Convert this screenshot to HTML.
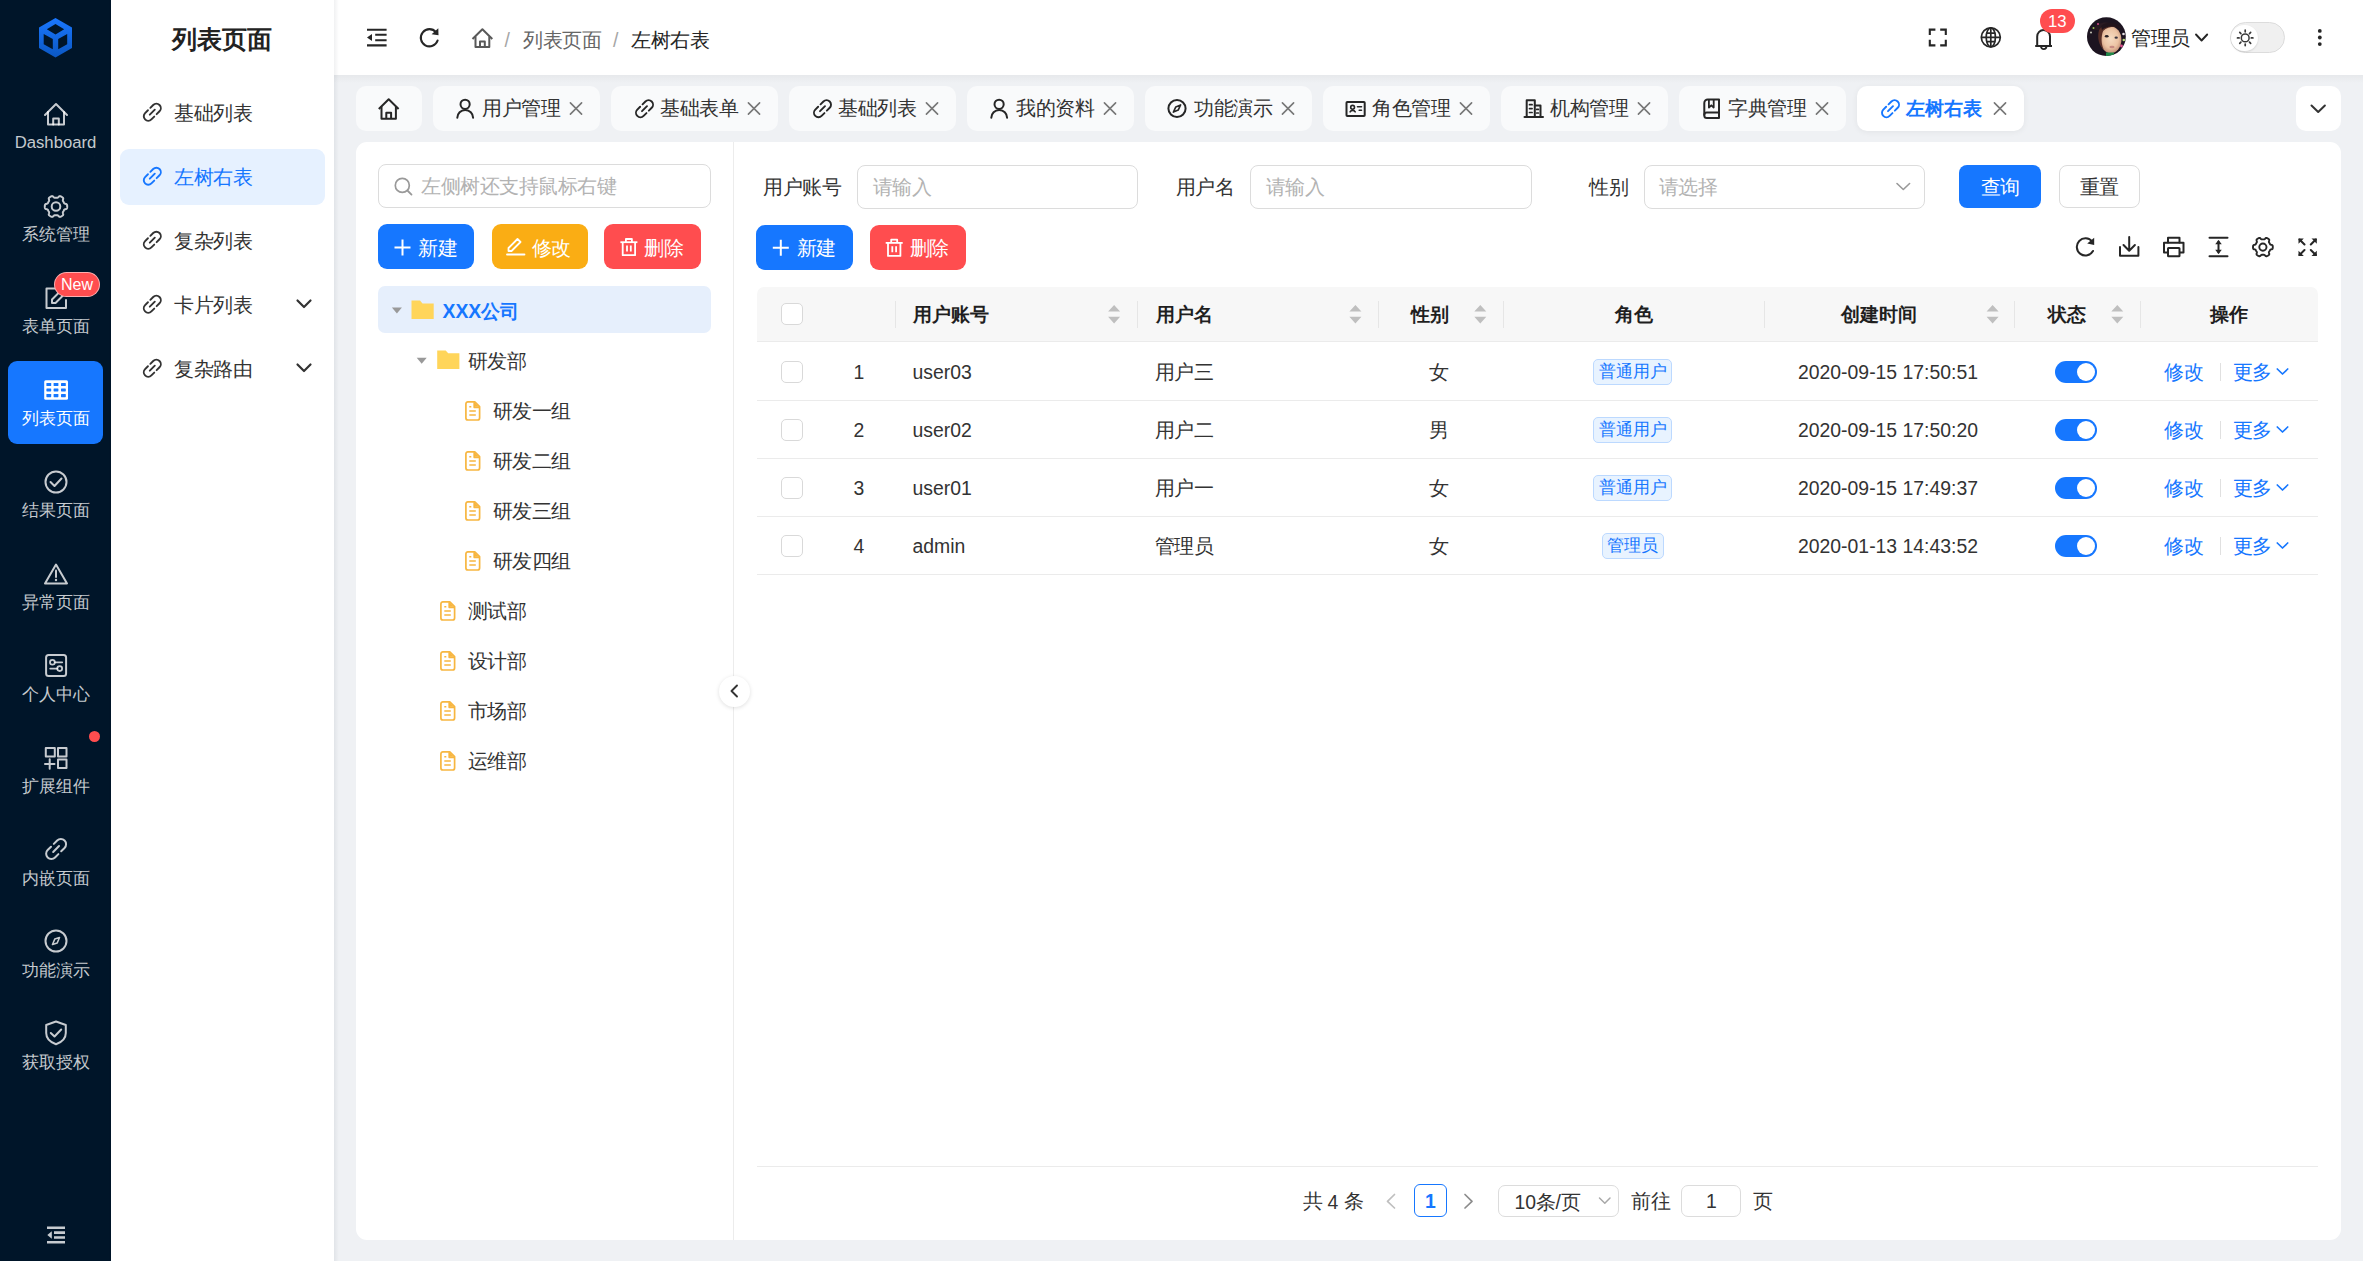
<!DOCTYPE html><html><head><meta charset="utf-8"><style>
*{box-sizing:border-box;margin:0;padding:0}
html,body{width:2363px;height:1261px;overflow:hidden;background:#eff1f4;font-family:"Liberation Sans",sans-serif;color:#262626}
.a{position:absolute}
.t{position:absolute;white-space:nowrap;line-height:1}
svg.i{position:absolute;overflow:visible}
</style></head><body>
<div class="a" style="left:0;top:0;width:111px;height:1261px;background:#001529"></div>
<svg class="i" style="left:0px;top:0px;" width="111" height="80" viewBox="0 0 111 80"><defs><linearGradient id="cg" x1="0" y1="0" x2="0" y2="1"><stop offset="0" stop-color="#1a77ff"/><stop offset="1" stop-color="#0b57c2"/></linearGradient></defs>
<path fill="url(#cg)" fill-rule="evenodd" d="M55.5 18 L72 27.5 L72 48 L55.5 57.5 L39 48 L39 27.5 Z M55.5 24 L46.8 29.2 L55.5 34.4 L64.2 29.2 Z M43.7 34 L52.8 39 L52.8 49.3 L43.7 44.2 Z M67.2 34 L58.2 39 L58.2 49.3 L67.2 44.2 Z"/></svg>
<div class="a" style="left:8px;top:361px;width:95px;height:83px;background:#1677ff;border-radius:9px"></div>
<div class="t" style="left:-244.5px;width:600px;text-align:center;top:135.32px;font-size:16.7px;color:rgba(255,255,255,.78);font-weight:normal;">Dashboard</div>
<div class="t" style="left:-244.5px;width:600px;text-align:center;top:227.32px;font-size:16.7px;color:rgba(255,255,255,.78);font-weight:normal;">系统管理</div>
<div class="t" style="left:-244.5px;width:600px;text-align:center;top:319.32px;font-size:16.7px;color:rgba(255,255,255,.78);font-weight:normal;">表单页面</div>
<div class="t" style="left:-244.5px;width:600px;text-align:center;top:411.32px;font-size:16.7px;color:#fff;font-weight:normal;">列表页面</div>
<div class="t" style="left:-244.5px;width:600px;text-align:center;top:503.32px;font-size:16.7px;color:rgba(255,255,255,.78);font-weight:normal;">结果页面</div>
<div class="t" style="left:-244.5px;width:600px;text-align:center;top:595.32px;font-size:16.7px;color:rgba(255,255,255,.78);font-weight:normal;">异常页面</div>
<div class="t" style="left:-244.5px;width:600px;text-align:center;top:687.32px;font-size:16.7px;color:rgba(255,255,255,.78);font-weight:normal;">个人中心</div>
<div class="t" style="left:-244.5px;width:600px;text-align:center;top:779.32px;font-size:16.7px;color:rgba(255,255,255,.78);font-weight:normal;">扩展组件</div>
<div class="t" style="left:-244.5px;width:600px;text-align:center;top:871.32px;font-size:16.7px;color:rgba(255,255,255,.78);font-weight:normal;">内嵌页面</div>
<div class="t" style="left:-244.5px;width:600px;text-align:center;top:963.32px;font-size:16.7px;color:rgba(255,255,255,.78);font-weight:normal;">功能演示</div>
<div class="t" style="left:-244.5px;width:600px;text-align:center;top:1055.32px;font-size:16.7px;color:rgba(255,255,255,.78);font-weight:normal;">获取授权</div>
<svg class="i" style="left:0px;top:0px;" width="111" height="1261" viewBox="0 0 111 1261">
<g fill="none" stroke="rgba(255,255,255,.78)" stroke-width="2" stroke-linecap="round" stroke-linejoin="round">
 <path d="M45 115 L56 104 L67 115"/>
 <path d="M48 112 V124.5 H64 V112"/>
 <path d="M53.2 124.5 V118.5 H58.8 V124.5"/>
</g>
<path d="M67.20 206.50 L67.19 206.89 L67.17 207.28 L67.12 207.67 L67.03 208.05 L66.88 208.42 L66.57 208.75 L66.02 209.00 L65.30 209.17 L64.74 209.34 L64.41 209.56 L64.21 209.82 L64.06 210.09 L63.92 210.36 L63.77 210.63 L63.62 210.90 L63.46 211.16 L63.30 211.43 L63.14 211.69 L62.98 211.95 L62.86 212.26 L62.83 212.65 L62.96 213.22 L63.17 213.92 L63.23 214.53 L63.10 214.96 L62.86 215.28 L62.57 215.54 L62.26 215.78 L61.93 216.00 L61.60 216.20 L61.26 216.39 L60.91 216.56 L60.55 216.71 L60.17 216.83 L59.78 216.88 L59.34 216.78 L58.85 216.42 L58.34 215.89 L57.91 215.49 L57.55 215.32 L57.23 215.27 L56.92 215.27 L56.61 215.29 L56.31 215.30 L56.00 215.30 L55.69 215.30 L55.39 215.29 L55.08 215.27 L54.77 215.27 L54.45 215.32 L54.09 215.49 L53.66 215.89 L53.15 216.42 L52.66 216.78 L52.22 216.88 L51.83 216.83 L51.45 216.71 L51.09 216.56 L50.74 216.39 L50.40 216.20 L50.07 216.00 L49.74 215.78 L49.43 215.54 L49.14 215.28 L48.90 214.96 L48.77 214.53 L48.83 213.92 L49.04 213.22 L49.17 212.65 L49.14 212.26 L49.02 211.95 L48.86 211.69 L48.70 211.43 L48.54 211.16 L48.38 210.90 L48.23 210.63 L48.08 210.36 L47.94 210.09 L47.79 209.82 L47.59 209.56 L47.26 209.34 L46.70 209.17 L45.98 209.00 L45.43 208.75 L45.12 208.42 L44.97 208.05 L44.88 207.67 L44.83 207.28 L44.81 206.89 L44.80 206.50 L44.81 206.11 L44.83 205.72 L44.88 205.33 L44.97 204.95 L45.12 204.58 L45.43 204.25 L45.98 204.00 L46.70 203.83 L47.26 203.66 L47.59 203.44 L47.79 203.18 L47.94 202.91 L48.08 202.64 L48.23 202.37 L48.38 202.10 L48.54 201.84 L48.70 201.57 L48.86 201.31 L49.02 201.05 L49.14 200.74 L49.17 200.35 L49.04 199.78 L48.83 199.08 L48.77 198.47 L48.90 198.04 L49.14 197.72 L49.43 197.46 L49.74 197.22 L50.07 197.00 L50.40 196.80 L50.74 196.61 L51.09 196.44 L51.45 196.29 L51.83 196.17 L52.22 196.12 L52.66 196.22 L53.15 196.58 L53.66 197.11 L54.09 197.51 L54.45 197.68 L54.77 197.73 L55.08 197.73 L55.39 197.71 L55.69 197.70 L56.00 197.70 L56.31 197.70 L56.61 197.71 L56.92 197.73 L57.23 197.73 L57.55 197.68 L57.91 197.51 L58.34 197.11 L58.85 196.58 L59.34 196.22 L59.78 196.12 L60.17 196.17 L60.55 196.29 L60.91 196.44 L61.26 196.61 L61.60 196.80 L61.93 197.00 L62.26 197.22 L62.57 197.46 L62.86 197.72 L63.10 198.04 L63.23 198.47 L63.17 199.08 L62.96 199.78 L62.83 200.35 L62.86 200.74 L62.98 201.05 L63.14 201.31 L63.30 201.57 L63.46 201.84 L63.62 202.10 L63.77 202.37 L63.92 202.64 L64.06 202.91 L64.21 203.18 L64.41 203.44 L64.74 203.66 L65.30 203.83 L66.02 204.00 L66.57 204.25 L66.88 204.58 L67.03 204.95 L67.12 205.33 L67.17 205.72 L67.19 206.11 Z" fill="none" stroke="rgba(255,255,255,.78)" stroke-width="2.0" stroke-linejoin="round"/><circle cx="56" cy="206.5" r="4.3" fill="none" stroke="rgba(255,255,255,.78)" stroke-width="2.0"/>
<g fill="none" stroke="rgba(255,255,255,.78)" stroke-width="2" stroke-linecap="round" stroke-linejoin="round">
 <path d="M55 288.5 H46.5 V308 H66 V300"/>
 <path d="M52 303 L52 299.5 L62 289.5 L65.5 293 L55.5 303 Z"/>
</g>
<g fill="none" stroke="rgba(255,255,255,.78)" stroke-width="2" stroke-linecap="round" stroke-linejoin="round">
 <circle cx="56" cy="482" r="10.5"/>
 <path d="M50.5 482 L54.5 486 L61.5 478.5"/>
 <path d="M56 564.5 L67 583.5 H45 Z"/>
 <path d="M56 570.5 V577"/>
</g>
<circle cx="56" cy="580" r="1.2" fill="rgba(255,255,255,.78)"/>
<g fill="none" stroke="rgba(255,255,255,.78)" stroke-width="2" stroke-linecap="round" stroke-linejoin="round">
 <rect x="46.1" y="655.1" width="20" height="20.8" rx="2.5"/>
 <path d="M55 662.3 H62.2" stroke-width="1.8"/><circle cx="52.4" cy="662.3" r="2.4" stroke-width="1.8"/>
 <path d="M50.2 668.6 H57.2" stroke-width="1.8"/><circle cx="59.7" cy="668.6" r="2.4" stroke-width="1.8"/>
 <rect x="45.8" y="748" width="9" height="8.5"/>
 <rect x="58" y="748" width="8.5" height="8.5"/>
 <rect x="58" y="759.5" width="8.5" height="8.5"/>
 <path d="M45 764 H54.5 M49.7 759.3 V768.7"/>
</g>
<g fill="none" stroke="rgba(255,255,255,.78)" stroke-width="2" stroke-linecap="round" stroke-linejoin="round">
</g><path d="M53.82 843.91 L57.16 840.56 A5.21 5.21 0 0 1 64.54 847.94 L61.19 851.28 M58.38 854.09 L55.04 857.44 A5.21 5.21 0 0 1 47.66 850.06 L51.01 846.72 M53.18 851.92 L59.02 846.08" fill="none" stroke="rgba(255,255,255,.78)" stroke-width="2.0" stroke-linecap="round"/><g fill="none" stroke="rgba(255,255,255,.78)" stroke-width="2" stroke-linecap="round" stroke-linejoin="round">
 <circle cx="56" cy="941" r="10.5"/>
 <path d="M59.5 937.5 L57.2 943 L52.5 944.5 L54.8 939 Z" stroke-width="1.6"/>
 <path d="M56 1021.5 L65.8 1025 V1033 C65.8 1038.5 61.5 1042.3 56 1044.2 C50.5 1042.3 46.2 1038.5 46.2 1033 V1025 Z"/>
 <path d="M50.8 1033 L54.5 1036.5 L61.2 1029.5"/>
</g>
<g fill="none" stroke="rgba(255,255,255,.78)" stroke-width="2.6">
 <path d="M47 1227.7 H65 M54 1232.6 H65 M54 1237.5 H65 M47 1242.3 H65"/>
</g>
<path d="M47.3 1235 L51.8 1231.2 V1238.8 Z" fill="rgba(255,255,255,.78)"/>
</svg>
<svg class="i" style="left:0px;top:0px;" width="111" height="1261" viewBox="0 0 111 1261"><rect x="44.2" y="380.3" width="23.8" height="19.4" rx="1.5" fill="#fff"/>
<g fill="#1677ff"><rect x="46.4" y="383" width="4.8" height="3" rx=".6"/><rect x="53.6" y="383" width="4.8" height="3" rx=".6"/><rect x="61" y="383" width="4.8" height="3" rx=".6"/>
<rect x="46.4" y="388.4" width="4.8" height="3" rx=".6"/><rect x="53.6" y="388.4" width="4.8" height="3" rx=".6"/><rect x="61" y="388.4" width="4.8" height="3" rx=".6"/>
<rect x="46.4" y="393.9" width="4.8" height="3.3" rx=".6"/><rect x="53.6" y="393.9" width="4.8" height="3.3" rx=".6"/><rect x="61" y="393.9" width="4.8" height="3.3" rx=".6"/></g></svg>
<div class="a" style="left:54px;top:271.5px;width:46px;height:25.5px;border-radius:13px;background:#ff4d4f;border:1px solid rgba(255,255,255,.55)"></div>
<div class="t" style="left:-223px;width:600px;text-align:center;top:276.94px;font-size:16px;color:#fff;font-weight:normal;">New</div>
<div class="a" style="left:89px;top:731px;width:11px;height:11px;border-radius:50%;background:#ff4d4f"></div>
<div class="a" style="left:111px;top:0;width:223px;height:1261px;background:#fff;box-shadow:1px 0 4px rgba(0,21,41,.08)"></div>
<div class="t" style="left:-78px;width:600px;text-align:center;top:26.5px;font-size:25px;color:#222;font-weight:bold;">列表页面</div>
<div class="a" style="left:120px;top:149px;width:205px;height:56px;background:#e6f1ff;border-radius:9px"></div>
<div class="t" style="left:174px;top:103.88px;font-size:19.4px;color:#333;font-weight:normal;"><span style="font-size:20px;letter-spacing:-0.5px;position:relative;top:-0.7px">基础列表</span></div>
<svg class="i" style="left:0px;top:0px;" width="340" height="400" viewBox="0 0 340 400"><path d="M150.35 107.85 L153.21 104.99 A4.45 4.45 0 0 1 159.51 111.29 L156.65 114.15 M154.25 116.55 L151.39 119.41 A4.45 4.45 0 0 1 145.09 113.11 L147.95 110.25 M149.80 114.70 L154.80 109.70" fill="none" stroke="#333" stroke-width="1.9" stroke-linecap="round"/></svg>
<div class="t" style="left:174px;top:167.88px;font-size:19.4px;color:#1677ff;font-weight:normal;"><span style="font-size:20px;letter-spacing:-0.5px;position:relative;top:-0.7px">左树右表</span></div>
<svg class="i" style="left:0px;top:0px;" width="340" height="400" viewBox="0 0 340 400"><path d="M150.35 171.85 L153.21 168.99 A4.45 4.45 0 0 1 159.51 175.29 L156.65 178.15 M154.25 180.55 L151.39 183.41 A4.45 4.45 0 0 1 145.09 177.11 L147.95 174.25 M149.80 178.70 L154.80 173.70" fill="none" stroke="#1677ff" stroke-width="1.9" stroke-linecap="round"/></svg>
<div class="t" style="left:174px;top:231.88px;font-size:19.4px;color:#333;font-weight:normal;"><span style="font-size:20px;letter-spacing:-0.5px;position:relative;top:-0.7px">复杂列表</span></div>
<svg class="i" style="left:0px;top:0px;" width="340" height="400" viewBox="0 0 340 400"><path d="M150.35 235.85 L153.21 232.99 A4.45 4.45 0 0 1 159.51 239.29 L156.65 242.15 M154.25 244.55 L151.39 247.41 A4.45 4.45 0 0 1 145.09 241.11 L147.95 238.25 M149.80 242.70 L154.80 237.70" fill="none" stroke="#333" stroke-width="1.9" stroke-linecap="round"/></svg>
<div class="t" style="left:174px;top:295.88px;font-size:19.4px;color:#333;font-weight:normal;"><span style="font-size:20px;letter-spacing:-0.5px;position:relative;top:-0.7px">卡片列表</span></div>
<svg class="i" style="left:0px;top:0px;" width="340" height="400" viewBox="0 0 340 400"><path d="M150.35 299.85 L153.21 296.99 A4.45 4.45 0 0 1 159.51 303.29 L156.65 306.15 M154.25 308.55 L151.39 311.41 A4.45 4.45 0 0 1 145.09 305.11 L147.95 302.25 M149.80 306.70 L154.80 301.70" fill="none" stroke="#333" stroke-width="1.9" stroke-linecap="round"/></svg>
<div class="t" style="left:174px;top:359.88px;font-size:19.4px;color:#333;font-weight:normal;"><span style="font-size:20px;letter-spacing:-0.5px;position:relative;top:-0.7px">复杂路由</span></div>
<svg class="i" style="left:0px;top:0px;" width="340" height="400" viewBox="0 0 340 400"><path d="M150.35 363.85 L153.21 360.99 A4.45 4.45 0 0 1 159.51 367.29 L156.65 370.15 M154.25 372.55 L151.39 375.41 A4.45 4.45 0 0 1 145.09 369.11 L147.95 366.25 M149.80 370.70 L154.80 365.70" fill="none" stroke="#333" stroke-width="1.9" stroke-linecap="round"/></svg>
<svg class="i" style="left:0px;top:0px;" width="340" height="400" viewBox="0 0 340 400"><path d="M297.5 300.5 L304 307 L310.5 300.5" fill="none" stroke="#333" stroke-width="2.2" stroke-linecap="round" stroke-linejoin="round"/></svg>
<svg class="i" style="left:0px;top:0px;" width="340" height="400" viewBox="0 0 340 400"><path d="M297.5 364.5 L304 371 L310.5 364.5" fill="none" stroke="#333" stroke-width="2.2" stroke-linecap="round" stroke-linejoin="round"/></svg>
<div class="a" style="left:334px;top:0;width:2029px;height:75px;background:#fff"></div>
<svg class="i" style="left:0px;top:0px;" width="2363" height="80" viewBox="0 0 2363 80">
<g fill="none" stroke="#262626" stroke-width="2.1">
 <path d="M367 29.7 H386.6 M375.2 34.8 H386.6 M375.2 40.2 H386.6 M367 45.4 H386.6"/>
</g>
<path d="M367 37.5 L372 34 V41 Z" fill="#262626"/>
<g fill="none" stroke="#262626" stroke-width="2.1" stroke-linecap="round">
 <path d="M437.6 40.5 A8.6 8.6 0 1 1 436 32.2"/>
</g>
<path d="M438.3 28.2 L438.5 35.3 L431.6 34.2 Z" fill="#262626"/>
<g fill="none" stroke="#595959" stroke-width="2" stroke-linejoin="round">
 <path d="M472.5 39 L482.4 29.2 L492.3 39"/>
 <path d="M475.5 36.5 V47 H489.3 V36.5"/>
 <path d="M480 47 V41.5 H484.8 V47"/>
</g>
</svg>
<div class="t" style="left:504.5px;top:30.58px;font-size:19.4px;color:#a6a6a6;font-weight:normal;">/</div>
<div class="t" style="left:523px;top:30.78px;font-size:19.4px;color:#666;font-weight:normal;"><span style="font-size:20px;letter-spacing:-0.5px;position:relative;top:-0.7px">列表页面</span></div>
<div class="t" style="left:613px;top:30.58px;font-size:19.4px;color:#a6a6a6;font-weight:normal;">/</div>
<div class="t" style="left:631px;top:30.78px;font-size:19.4px;color:#262626;font-weight:normal;"><span style="font-size:20px;letter-spacing:-0.5px;position:relative;top:-0.7px">左树右表</span></div>
<svg class="i" style="left:0px;top:0px;" width="2363" height="80" viewBox="0 0 2363 80">
<g fill="none" stroke="#262626" stroke-width="2.1">
 <path d="M1929.8 35 V29.6 H1935.4 M1940.2 29.6 H1945.8 V35 M1945.8 39.8 V45.4 H1940.2 M1935.4 45.4 H1929.8 V39.8"/>
</g>
<g fill="none" stroke="#262626" stroke-width="1.7">
 <circle cx="1990.8" cy="37.35" r="9.5"/>
 <ellipse cx="1990.8" cy="37.35" rx="4.6" ry="9.5"/>
 <path d="M1990.8 27.85 V46.85 M1981.3 37.35 H2000.3 M1986.2 33.15 H1995.4 M1986.2 41.55 H1995.4"/>
</g>
<g fill="none" stroke="#262626" stroke-width="2" stroke-linejoin="round">
 <path d="M2037.2 46 V36.5 A6.4 6.6 0 0 1 2050 36.5 V46"/>
 <path d="M2035.2 46 H2052"/>
</g>
<path d="M2041 46.6 A2.7 2.5 0 0 0 2046.4 46.6" fill="none" stroke="#262626" stroke-width="1.9"/>
</svg>
<div class="a" style="left:2039.6px;top:9.1px;width:35.2px;height:24.3px;border-radius:12.2px;background:#ff4d4f"></div>
<div class="t" style="left:1757.1999999999998px;width:600px;text-align:center;top:13.95px;font-size:16.7px;color:#fff;font-weight:normal;">13</div>
<svg class="i" style="left:0px;top:0px;" width="2363" height="80" viewBox="0 0 2363 80"><defs><clipPath id="avc"><circle cx="2106.4" cy="36.7" r="19.4"/></clipPath>
<radialGradient id="skin" cx="0.5" cy="0.45" r="0.6"><stop offset="0" stop-color="#f6dcc2"/><stop offset="0.6" stop-color="#ecc3a3"/><stop offset="1" stop-color="#b9826a"/></radialGradient></defs>
<g clip-path="url(#avc)">
<rect x="2086" y="17" width="41" height="41" fill="#1c1420"/>
<path d="M2093 30 C2096 22 2108 20 2118 26 L2112 30 Z" fill="#2a1a22"/>
<ellipse cx="2110.8" cy="39.8" rx="10.6" ry="13.4" fill="url(#skin)"/>
<path d="M2099 30 C2104 23 2114 22 2121 28 C2116 26 2108 26 2103 31 C2101 37 2101 44 2104 50 C2099 46 2097 38 2099 30 Z" fill="#5a3028"/>
<path d="M2101 26 C2106 22 2112 22 2118 25 L2121 29 C2114 25 2106 26 2102 30 Z" fill="#21141c"/>
<ellipse cx="2106.7" cy="36.3" rx="1.9" ry="1.2" fill="#2b2226"/>
<ellipse cx="2116.2" cy="37.7" rx="1.7" ry="1.1" fill="#3a3440"/>
<ellipse cx="2112" cy="47" rx="2.6" ry="1.2" fill="#c88c82"/>
<rect x="2106" y="52.5" width="8" height="5" fill="#1f8a4a"/>
<circle cx="2123.5" cy="34" r="1.3" fill="#e9e2e6"/><circle cx="2123.8" cy="40" r="1.3" fill="#b9e07a"/><circle cx="2121.5" cy="46" r="1.4" fill="#e0508f"/>
<circle cx="2098" cy="24" r="1" fill="#d04a8a"/><circle cx="2093.5" cy="28" r="1" fill="#9bbf5a"/><circle cx="2091" cy="32.5" r="1" fill="#c9c9b9"/>
</g></svg>
<div class="t" style="left:2131px;top:28.58px;font-size:19.4px;color:#262626;font-weight:normal;"><span style="font-size:20px;letter-spacing:-0.5px;position:relative;top:-0.7px">管理员</span></div>
<svg class="i" style="left:0px;top:0px;" width="2363" height="80" viewBox="0 0 2363 80"><path d="M2196 34.5 L2201.6 40.5 L2207.2 34.5" fill="none" stroke="#262626" stroke-width="1.9" stroke-linecap="round" stroke-linejoin="round"/></svg>
<div class="a" style="left:2229.6px;top:22px;width:55px;height:31px;border-radius:15.5px;background:#f0f0f0;border:1px solid #dcdcdc"></div>
<div class="a" style="left:2231.4px;top:24.8px;width:26.2px;height:26.2px;border-radius:50%;background:#fff;box-shadow:0 1px 2px rgba(0,0,0,.12)"></div>
<svg class="i" style="left:0px;top:0px;" width="2363" height="80" viewBox="0 0 2363 80"><circle cx="2245.2" cy="37.9" r="3.9" fill="none" stroke="#3a3a3a" stroke-width="1.5"/><path d="M2251.30 37.90 L2252.90 37.90 M2249.51 42.21 L2250.64 43.34 M2245.20 44.00 L2245.20 45.60 M2240.89 42.21 L2239.76 43.34 M2239.10 37.90 L2237.50 37.90 M2240.89 33.59 L2239.76 32.46 M2245.20 31.80 L2245.20 30.20 M2249.51 33.59 L2250.64 32.46 " stroke="#3a3a3a" stroke-width="1.7" stroke-linecap="round"/></svg>
<svg class="i" style="left:0px;top:0px;" width="2363" height="80" viewBox="0 0 2363 80"><circle cx="2319.8" cy="30.9" r="1.9" fill="#262626"/><circle cx="2319.8" cy="37.5" r="1.9" fill="#262626"/><circle cx="2319.8" cy="44.1" r="1.9" fill="#262626"/></svg>
<div class="a" style="left:334px;top:75px;width:2029px;height:1186px;background:#eff1f4"></div>
<div class="a" style="left:334px;top:75px;width:2029px;height:8px;background:linear-gradient(rgba(0,0,0,.035),rgba(0,0,0,0))"></div>
<div class="a" style="left:356px;top:86px;width:66px;height:45px;border-radius:10px;background:#f9fafb"></div>
<svg class="i" style="left:0px;top:0px;" width="2363" height="140" viewBox="0 0 2363 140"><g fill="none" stroke="#262626" stroke-width="2" stroke-linejoin="round">
 <path d="M378.8 109 L388.7 99.2 L398.6 109"/>
 <path d="M381.5 106.5 V118.7 H395.9 V106.5"/>
 <path d="M386.3 118.7 V112.8 H391.1 V118.7"/></g></svg>
<div class="a" style="left:433px;top:86px;width:167px;height:45px;border-radius:10px;background:#f9fafb;"></div>
<svg class="i" style="left:0px;top:0px;" width="2363" height="140" viewBox="0 0 2363 140"><g fill="none" stroke="#262626" stroke-width="2" stroke-linecap="round" stroke-linejoin="round"><circle cx="465.1" cy="104.3" r="4.6"/><path d="M457.3 117.8 A7.9 7.9 0 0 1 473.1 117.8"/></g></svg>
<div class="t" style="left:482px;top:99.08px;font-size:19.4px;color:#333;font-weight:normal;"><span style="font-size:20px;letter-spacing:-0.5px;position:relative;top:-0.7px">用户管理</span></div>
<svg class="i" style="left:0px;top:0px;" width="2363" height="140" viewBox="0 0 2363 140"><path d="M570.4 102.9 L581.6 114.1 M581.6 102.9 L570.4 114.1" stroke="#777" stroke-width="1.6" stroke-linecap="round"/></svg>
<div class="a" style="left:611px;top:86px;width:167px;height:45px;border-radius:10px;background:#f9fafb;"></div>
<svg class="i" style="left:0px;top:0px;" width="2363" height="140" viewBox="0 0 2363 140"><path d="M642.55 104.35 L645.41 101.49 A4.45 4.45 0 0 1 651.71 107.79 L648.85 110.65 M646.45 113.05 L643.59 115.91 A4.45 4.45 0 0 1 637.29 109.61 L640.15 106.75 M642.00 111.20 L647.00 106.20" fill="none" stroke="#262626" stroke-width="1.9" stroke-linecap="round"/></svg>
<div class="t" style="left:660px;top:99.08px;font-size:19.4px;color:#333;font-weight:normal;"><span style="font-size:20px;letter-spacing:-0.5px;position:relative;top:-0.7px">基础表单</span></div>
<svg class="i" style="left:0px;top:0px;" width="2363" height="140" viewBox="0 0 2363 140"><path d="M748.4 102.9 L759.6 114.1 M759.6 102.9 L748.4 114.1" stroke="#777" stroke-width="1.6" stroke-linecap="round"/></svg>
<div class="a" style="left:789px;top:86px;width:167px;height:45px;border-radius:10px;background:#f9fafb;"></div>
<svg class="i" style="left:0px;top:0px;" width="2363" height="140" viewBox="0 0 2363 140"><path d="M820.55 104.35 L823.41 101.49 A4.45 4.45 0 0 1 829.71 107.79 L826.85 110.65 M824.45 113.05 L821.59 115.91 A4.45 4.45 0 0 1 815.29 109.61 L818.15 106.75 M820.00 111.20 L825.00 106.20" fill="none" stroke="#262626" stroke-width="1.9" stroke-linecap="round"/></svg>
<div class="t" style="left:838px;top:99.08px;font-size:19.4px;color:#333;font-weight:normal;"><span style="font-size:20px;letter-spacing:-0.5px;position:relative;top:-0.7px">基础列表</span></div>
<svg class="i" style="left:0px;top:0px;" width="2363" height="140" viewBox="0 0 2363 140"><path d="M926.4 102.9 L937.6 114.1 M937.6 102.9 L926.4 114.1" stroke="#777" stroke-width="1.6" stroke-linecap="round"/></svg>
<div class="a" style="left:967px;top:86px;width:167px;height:45px;border-radius:10px;background:#f9fafb;"></div>
<svg class="i" style="left:0px;top:0px;" width="2363" height="140" viewBox="0 0 2363 140"><g fill="none" stroke="#262626" stroke-width="2" stroke-linecap="round" stroke-linejoin="round"><circle cx="999.1" cy="104.3" r="4.6"/><path d="M991.3 117.8 A7.9 7.9 0 0 1 1007.1 117.8"/></g></svg>
<div class="t" style="left:1016px;top:99.08px;font-size:19.4px;color:#333;font-weight:normal;"><span style="font-size:20px;letter-spacing:-0.5px;position:relative;top:-0.7px">我的资料</span></div>
<svg class="i" style="left:0px;top:0px;" width="2363" height="140" viewBox="0 0 2363 140"><path d="M1104.4 102.9 L1115.6 114.1 M1115.6 102.9 L1104.4 114.1" stroke="#777" stroke-width="1.6" stroke-linecap="round"/></svg>
<div class="a" style="left:1145px;top:86px;width:167px;height:45px;border-radius:10px;background:#f9fafb;"></div>
<svg class="i" style="left:0px;top:0px;" width="2363" height="140" viewBox="0 0 2363 140"><g fill="none" stroke="#262626" stroke-width="2" stroke-linecap="round" stroke-linejoin="round"><circle cx="1177.0" cy="108.5" r="8.6"/></g><path d="M1180.6 104.9 L1178.2 110.1 L1173.4 112.1 L1175.8 106.9 Z" fill="none" stroke="#262626" stroke-width="1.6" stroke-linejoin="round"/></svg>
<div class="t" style="left:1194px;top:99.08px;font-size:19.4px;color:#333;font-weight:normal;"><span style="font-size:20px;letter-spacing:-0.5px;position:relative;top:-0.7px">功能演示</span></div>
<svg class="i" style="left:0px;top:0px;" width="2363" height="140" viewBox="0 0 2363 140"><path d="M1282.4 102.9 L1293.6 114.1 M1293.6 102.9 L1282.4 114.1" stroke="#777" stroke-width="1.6" stroke-linecap="round"/></svg>
<div class="a" style="left:1323px;top:86px;width:167px;height:45px;border-radius:10px;background:#f9fafb;"></div>
<svg class="i" style="left:0px;top:0px;" width="2363" height="140" viewBox="0 0 2363 140"><g fill="none" stroke="#262626" stroke-width="2" stroke-linecap="round" stroke-linejoin="round"><rect x="1346.5" y="101.9" width="18.2" height="14.2" rx="0.8"/></g><g fill="none" stroke="#262626" stroke-width="1.6" stroke-linecap="round"><circle cx="1352.6" cy="107.3" r="1.9"/><path d="M1350.1 111.9 A2.9 2.9 0 0 1 1355.2 111.9"/><path d="M1357.5 106.7 H1361.5 M1359.2 110.3 H1361.5"/></g></svg>
<div class="t" style="left:1372px;top:99.08px;font-size:19.4px;color:#333;font-weight:normal;"><span style="font-size:20px;letter-spacing:-0.5px;position:relative;top:-0.7px">角色管理</span></div>
<svg class="i" style="left:0px;top:0px;" width="2363" height="140" viewBox="0 0 2363 140"><path d="M1460.4 102.9 L1471.6 114.1 M1471.6 102.9 L1460.4 114.1" stroke="#777" stroke-width="1.6" stroke-linecap="round"/></svg>
<div class="a" style="left:1501px;top:86px;width:167px;height:45px;border-radius:10px;background:#f9fafb;"></div>
<svg class="i" style="left:0px;top:0px;" width="2363" height="140" viewBox="0 0 2363 140"><g fill="none" stroke="#262626" stroke-width="2" stroke-linejoin="round" stroke-linecap="round"><path d="M1524.5 117.0 H1543.0"/><path d="M1526.7 117.0 V100.3 H1534.8 V117.0"/><path d="M1534.8 105.6 H1540.5 V117.0"/></g><g fill="none" stroke="#262626" stroke-width="1.7" stroke-linecap="round"><path d="M1529.5 104.7 H1532.1 M1529.5 108.6 H1532.1 M1529.5 112.5 H1532.1 M1536.7 109.4 H1538.4 M1536.7 113.0 H1538.4"/></g></svg>
<div class="t" style="left:1550px;top:99.08px;font-size:19.4px;color:#333;font-weight:normal;"><span style="font-size:20px;letter-spacing:-0.5px;position:relative;top:-0.7px">机构管理</span></div>
<svg class="i" style="left:0px;top:0px;" width="2363" height="140" viewBox="0 0 2363 140"><path d="M1638.4 102.9 L1649.6 114.1 M1649.6 102.9 L1638.4 114.1" stroke="#777" stroke-width="1.6" stroke-linecap="round"/></svg>
<div class="a" style="left:1679px;top:86px;width:167px;height:45px;border-radius:10px;background:#f9fafb;"></div>
<svg class="i" style="left:0px;top:0px;" width="2363" height="140" viewBox="0 0 2363 140"><g fill="none" stroke="#262626" stroke-width="2" stroke-linecap="round" stroke-linejoin="round"><path d="M1704.3 114.5 V103.0 A3.5 3.5 0 0 1 1707.8 99.5 H1719.0 V118.0 H1706.8 A2.5 2.5 0 0 1 1704.3 115.5 Z"/><path d="M1704.3 114.8 A2.5 2.5 0 0 1 1706.8 112.4 H1719.0"/></g><path d="M1708.9 99.5 V107.5 L1711.3 105.3 L1713.7 107.5 V99.5" fill="none" stroke="#262626" stroke-width="1.8" stroke-linejoin="round"/></svg>
<div class="t" style="left:1728px;top:99.08px;font-size:19.4px;color:#333;font-weight:normal;"><span style="font-size:20px;letter-spacing:-0.5px;position:relative;top:-0.7px">字典管理</span></div>
<svg class="i" style="left:0px;top:0px;" width="2363" height="140" viewBox="0 0 2363 140"><path d="M1816.4 102.9 L1827.6 114.1 M1827.6 102.9 L1816.4 114.1" stroke="#777" stroke-width="1.6" stroke-linecap="round"/></svg>
<div class="a" style="left:1857px;top:86px;width:167px;height:45px;border-radius:10px;background:#fff;box-shadow:0 1px 6px rgba(0,0,0,.06)"></div>
<svg class="i" style="left:0px;top:0px;" width="2363" height="140" viewBox="0 0 2363 140"><path d="M1888.55 104.35 L1891.41 101.49 A4.45 4.45 0 0 1 1897.71 107.79 L1894.85 110.65 M1892.45 113.05 L1889.59 115.91 A4.45 4.45 0 0 1 1883.29 109.61 L1886.15 106.75 M1888.00 111.20 L1893.00 106.20" fill="none" stroke="#1677ff" stroke-width="1.9" stroke-linecap="round"/></svg>
<div class="t" style="left:1906px;top:99.08px;font-size:19.4px;color:#1677ff;font-weight:bold;">左树右表</div>
<svg class="i" style="left:0px;top:0px;" width="2363" height="140" viewBox="0 0 2363 140"><path d="M1994.4 102.9 L2005.6 114.1 M2005.6 102.9 L1994.4 114.1" stroke="#777" stroke-width="1.6" stroke-linecap="round"/></svg>
<div class="a" style="left:2296px;top:86px;width:44.5px;height:44.5px;border-radius:10px;background:#fff"></div>
<svg class="i" style="left:0px;top:0px;" width="2363" height="140" viewBox="0 0 2363 140"><path d="M2311.5 105.5 L2318.2 112 L2324.9 105.5" fill="none" stroke="#333" stroke-width="2" stroke-linecap="round" stroke-linejoin="round"/></svg>
<div class="a" style="left:334px;top:0;width:5px;height:1261px;background:linear-gradient(to right,rgba(0,21,41,.06),rgba(0,21,41,0))"></div>
<div class="a" style="left:356px;top:142px;width:1984.5px;height:1097.8px;background:#fff;border-radius:11px"></div>
<div class="a" style="left:733px;top:142px;width:1px;height:1097.8px;background:#ececec"></div>
<div class="a" style="left:378px;top:164.3px;width:333px;height:43.5px;border:1px solid #dcdcdc;border-radius:8px"></div>
<svg class="i" style="left:0px;top:0px;" width="2363" height="300" viewBox="0 0 2363 300"><circle cx="402.3" cy="185.4" r="7" fill="none" stroke="#999" stroke-width="1.7"/><path d="M407.4 190.5 L411.5 194.6" stroke="#999" stroke-width="1.8" stroke-linecap="round"/></svg>
<div class="t" style="left:421px;top:177.08px;font-size:19.4px;color:#b3b3b3;font-weight:normal;"><span style="font-size:20px;letter-spacing:-0.5px;position:relative;top:-0.7px">左侧树还支持鼠标右键</span></div>
<div class="a" style="left:378px;top:224.2px;width:96.3px;height:44.4px;background:#1677ff;border-radius:9px;"></div>
<div class="a" style="left:491.5px;top:224.2px;width:96.3px;height:44.4px;background:#faad14;border-radius:9px;"></div>
<div class="a" style="left:604.4px;top:224.2px;width:96.3px;height:44.4px;background:#ff4d4f;border-radius:9px;"></div>
<svg class="i" style="left:0px;top:0px;" width="2363" height="300" viewBox="0 0 2363 300"><path d="M394.5 247.5 H410.5 M402.5 239.5 V255.5" stroke="#fff" stroke-width="2" /><g fill="none" stroke="#fff" stroke-width="1.8" stroke-linejoin="round" stroke-linecap="round">
<path d="M508.5 251 L508.5 248 L517.5 239 L520.5 242 L511.5 251 Z"/><path d="M507 254.5 H524.5"/></g><g fill="none" stroke="#fff" stroke-width="1.8" stroke-linejoin="round">
<path d="M620.4 242.2 H637.4"/><path d="M625.9 242.2 V239 H631.9 V242.2"/>
<path d="M622.6999999999999 242.2 V255.2 H635.1 V242.2"/><path d="M627.0 245.5 V251.5 M630.8 245.5 V251.5"/></g></svg>
<div class="t" style="left:418px;top:238.38px;font-size:19.4px;color:#fff;font-weight:normal;"><span style="font-size:20px;letter-spacing:-0.5px;position:relative;top:-0.7px">新建</span></div>
<div class="t" style="left:531.5px;top:238.38px;font-size:19.4px;color:#fff;font-weight:normal;"><span style="font-size:20px;letter-spacing:-0.5px;position:relative;top:-0.7px">修改</span></div>
<div class="t" style="left:644px;top:238.38px;font-size:19.4px;color:#fff;font-weight:normal;"><span style="font-size:20px;letter-spacing:-0.5px;position:relative;top:-0.7px">删除</span></div>
<div class="a" style="left:378px;top:285.8px;width:333px;height:47px;background:#e6effc;border-radius:7px"></div>
<svg class="i" style="left:0px;top:0px;" width="2363" height="800" viewBox="0 0 2363 800"><path d="M391.9 307.5 L401.9 307.5 L396.9 313.5 Z" fill="#999"/><path d="M411.5 300.6 H420.0 L422.5 303.40000000000003 H433.7 V319.0 H411.5 Z" fill="#ffd55a"/><path d="M416.7 357.8 L426.7 357.8 L421.7 363.8 Z" fill="#999"/><path d="M437.2 350.5 H445.7 L448.2 353.3 H459.4 V368.9 H437.2 Z" fill="#ffd55a"/></svg>
<div class="t" style="left:442.5px;top:301.58px;font-size:19.4px;color:#1677ff;font-weight:bold;">XXX公司</div>
<div class="t" style="left:467.5px;top:351.88px;font-size:19.4px;color:#333;font-weight:normal;"><span style="font-size:20px;letter-spacing:-0.5px;position:relative;top:-0.7px">研发部</span></div>
<svg class="i" style="left:0px;top:0px;" width="2363" height="800" viewBox="0 0 2363 800"><g fill="none" stroke="#f7b640" stroke-width="1.7" stroke-linejoin="round">
<path d="M468 401.9 H474.8 L479.6 406.7 V418 A2 2 0 0 1 477.6 420 H467.9 A2 2 0 0 1 465.9 418 V403.9 A2 2 0 0 1 468 401.9 Z"/>
<path d="M474.2 402.2 V407.3 H479.3" />
<path d="M469.3 406.7 H471.3 M469.3 411 H475.8 M469.3 415 H475.8" stroke-width="1.5"/></g>
<path d="M474.8 402.5 L479 406.7 H474.8 Z" fill="#f7b640"/></svg>
<div class="t" style="left:492.5px;top:402.08px;font-size:19.4px;color:#333;font-weight:normal;"><span style="font-size:20px;letter-spacing:-0.5px;position:relative;top:-0.7px">研发一组</span></div>
<svg class="i" style="left:0px;top:0px;" width="2363" height="800" viewBox="0 0 2363 800"><g fill="none" stroke="#f7b640" stroke-width="1.7" stroke-linejoin="round">
<path d="M468 451.9 H474.8 L479.6 456.7 V468 A2 2 0 0 1 477.6 470 H467.9 A2 2 0 0 1 465.9 468 V453.9 A2 2 0 0 1 468 451.9 Z"/>
<path d="M474.2 452.2 V457.3 H479.3" />
<path d="M469.3 456.7 H471.3 M469.3 461 H475.8 M469.3 465 H475.8" stroke-width="1.5"/></g>
<path d="M474.8 452.5 L479 456.7 H474.8 Z" fill="#f7b640"/></svg>
<div class="t" style="left:492.5px;top:452.08px;font-size:19.4px;color:#333;font-weight:normal;"><span style="font-size:20px;letter-spacing:-0.5px;position:relative;top:-0.7px">研发二组</span></div>
<svg class="i" style="left:0px;top:0px;" width="2363" height="800" viewBox="0 0 2363 800"><g fill="none" stroke="#f7b640" stroke-width="1.7" stroke-linejoin="round">
<path d="M468 501.9 H474.8 L479.6 506.7 V518 A2 2 0 0 1 477.6 520 H467.9 A2 2 0 0 1 465.9 518 V503.9 A2 2 0 0 1 468 501.9 Z"/>
<path d="M474.2 502.2 V507.3 H479.3" />
<path d="M469.3 506.7 H471.3 M469.3 511 H475.8 M469.3 515 H475.8" stroke-width="1.5"/></g>
<path d="M474.8 502.5 L479 506.7 H474.8 Z" fill="#f7b640"/></svg>
<div class="t" style="left:492.5px;top:502.08px;font-size:19.4px;color:#333;font-weight:normal;"><span style="font-size:20px;letter-spacing:-0.5px;position:relative;top:-0.7px">研发三组</span></div>
<svg class="i" style="left:0px;top:0px;" width="2363" height="800" viewBox="0 0 2363 800"><g fill="none" stroke="#f7b640" stroke-width="1.7" stroke-linejoin="round">
<path d="M468 551.9 H474.8 L479.6 556.7 V568 A2 2 0 0 1 477.6 570 H467.9 A2 2 0 0 1 465.9 568 V553.9 A2 2 0 0 1 468 551.9 Z"/>
<path d="M474.2 552.2 V557.3 H479.3" />
<path d="M469.3 556.7 H471.3 M469.3 561 H475.8 M469.3 565 H475.8" stroke-width="1.5"/></g>
<path d="M474.8 552.5 L479 556.7 H474.8 Z" fill="#f7b640"/></svg>
<div class="t" style="left:492.5px;top:552.08px;font-size:19.4px;color:#333;font-weight:normal;"><span style="font-size:20px;letter-spacing:-0.5px;position:relative;top:-0.7px">研发四组</span></div>
<svg class="i" style="left:0px;top:0px;" width="2363" height="800" viewBox="0 0 2363 800"><g fill="none" stroke="#f7b640" stroke-width="1.7" stroke-linejoin="round">
<path d="M443 601.9 H449.8 L454.6 606.7 V618 A2 2 0 0 1 452.6 620 H442.9 A2 2 0 0 1 440.9 618 V603.9 A2 2 0 0 1 443 601.9 Z"/>
<path d="M449.2 602.2 V607.3 H454.3" />
<path d="M444.3 606.7 H446.3 M444.3 611 H450.8 M444.3 615 H450.8" stroke-width="1.5"/></g>
<path d="M449.8 602.5 L454 606.7 H449.8 Z" fill="#f7b640"/></svg>
<div class="t" style="left:467.5px;top:602.08px;font-size:19.4px;color:#333;font-weight:normal;"><span style="font-size:20px;letter-spacing:-0.5px;position:relative;top:-0.7px">测试部</span></div>
<svg class="i" style="left:0px;top:0px;" width="2363" height="800" viewBox="0 0 2363 800"><g fill="none" stroke="#f7b640" stroke-width="1.7" stroke-linejoin="round">
<path d="M443 651.9 H449.8 L454.6 656.7 V668 A2 2 0 0 1 452.6 670 H442.9 A2 2 0 0 1 440.9 668 V653.9 A2 2 0 0 1 443 651.9 Z"/>
<path d="M449.2 652.2 V657.3 H454.3" />
<path d="M444.3 656.7 H446.3 M444.3 661 H450.8 M444.3 665 H450.8" stroke-width="1.5"/></g>
<path d="M449.8 652.5 L454 656.7 H449.8 Z" fill="#f7b640"/></svg>
<div class="t" style="left:467.5px;top:652.08px;font-size:19.4px;color:#333;font-weight:normal;"><span style="font-size:20px;letter-spacing:-0.5px;position:relative;top:-0.7px">设计部</span></div>
<svg class="i" style="left:0px;top:0px;" width="2363" height="800" viewBox="0 0 2363 800"><g fill="none" stroke="#f7b640" stroke-width="1.7" stroke-linejoin="round">
<path d="M443 701.9 H449.8 L454.6 706.7 V718 A2 2 0 0 1 452.6 720 H442.9 A2 2 0 0 1 440.9 718 V703.9 A2 2 0 0 1 443 701.9 Z"/>
<path d="M449.2 702.2 V707.3 H454.3" />
<path d="M444.3 706.7 H446.3 M444.3 711 H450.8 M444.3 715 H450.8" stroke-width="1.5"/></g>
<path d="M449.8 702.5 L454 706.7 H449.8 Z" fill="#f7b640"/></svg>
<div class="t" style="left:467.5px;top:702.08px;font-size:19.4px;color:#333;font-weight:normal;"><span style="font-size:20px;letter-spacing:-0.5px;position:relative;top:-0.7px">市场部</span></div>
<svg class="i" style="left:0px;top:0px;" width="2363" height="800" viewBox="0 0 2363 800"><g fill="none" stroke="#f7b640" stroke-width="1.7" stroke-linejoin="round">
<path d="M443 751.9 H449.8 L454.6 756.7 V768 A2 2 0 0 1 452.6 770 H442.9 A2 2 0 0 1 440.9 768 V753.9 A2 2 0 0 1 443 751.9 Z"/>
<path d="M449.2 752.2 V757.3 H454.3" />
<path d="M444.3 756.7 H446.3 M444.3 761 H450.8 M444.3 765 H450.8" stroke-width="1.5"/></g>
<path d="M449.8 752.5 L454 756.7 H449.8 Z" fill="#f7b640"/></svg>
<div class="t" style="left:467.5px;top:752.08px;font-size:19.4px;color:#333;font-weight:normal;"><span style="font-size:20px;letter-spacing:-0.5px;position:relative;top:-0.7px">运维部</span></div>
<div class="a" style="left:718.7px;top:675.5px;width:31px;height:31px;border-radius:50%;background:#fff;box-shadow:0 1px 4px rgba(0,0,0,.13)"></div>
<svg class="i" style="left:0px;top:0px;" width="2363" height="800" viewBox="0 0 2363 800"><path d="M737 685.5 L731.5 691 L737 696.5" fill="none" stroke="#333" stroke-width="1.9" stroke-linecap="round" stroke-linejoin="round"/></svg>
<div class="t" style="left:763px;top:177.38px;font-size:19.4px;color:#333;font-weight:normal;"><span style="font-size:20px;letter-spacing:-0.5px;position:relative;top:-0.7px">用户账号</span></div>
<div class="a" style="left:856.8px;top:165.3px;width:281px;height:43.3px;border:1px solid #dcdcdc;border-radius:8px"></div>
<div class="t" style="left:872.5px;top:177.88px;font-size:19.4px;color:#b3b3b3;font-weight:normal;"><span style="font-size:20px;letter-spacing:-0.5px;position:relative;top:-0.7px">请输入</span></div>
<div class="t" style="left:1175.5px;top:177.38px;font-size:19.4px;color:#333;font-weight:normal;"><span style="font-size:20px;letter-spacing:-0.5px;position:relative;top:-0.7px">用户名</span></div>
<div class="a" style="left:1250px;top:165.3px;width:281.8px;height:43.3px;border:1px solid #dcdcdc;border-radius:8px"></div>
<div class="t" style="left:1265.5px;top:177.88px;font-size:19.4px;color:#b3b3b3;font-weight:normal;"><span style="font-size:20px;letter-spacing:-0.5px;position:relative;top:-0.7px">请输入</span></div>
<div class="t" style="left:1589px;top:177.38px;font-size:19.4px;color:#333;font-weight:normal;"><span style="font-size:20px;letter-spacing:-0.5px;position:relative;top:-0.7px">性别</span></div>
<div class="a" style="left:1644.3px;top:165.3px;width:281px;height:43.3px;border:1px solid #dcdcdc;border-radius:8px"></div>
<div class="t" style="left:1658.5px;top:177.88px;font-size:19.4px;color:#b3b3b3;font-weight:normal;"><span style="font-size:20px;letter-spacing:-0.5px;position:relative;top:-0.7px">请选择</span></div>
<svg class="i" style="left:0px;top:0px;" width="2363" height="300" viewBox="0 0 2363 300"><path d="M1897 183.5 L1903.3 189.5 L1909.6 183.5" fill="none" stroke="#999" stroke-width="1.6" stroke-linecap="round" stroke-linejoin="round"/></svg>
<div class="a" style="left:1959.3px;top:164.5px;width:81.5px;height:43.5px;background:#1677ff;border-radius:8px;"></div>
<div class="t" style="left:1700px;width:600px;text-align:center;top:177.38px;font-size:19.4px;color:#fff;font-weight:normal;"><span style="font-size:20px;letter-spacing:-0.5px;position:relative;top:-0.7px">查询</span></div>
<div class="a" style="left:2058.5px;top:164.5px;width:81.5px;height:43.5px;background:#fff;border-radius:8px;border:1px solid #dcdcdc;"></div>
<div class="t" style="left:1799.3000000000002px;width:600px;text-align:center;top:177.38px;font-size:19.4px;color:#333;font-weight:normal;"><span style="font-size:20px;letter-spacing:-0.5px;position:relative;top:-0.7px">重置</span></div>
<div class="a" style="left:756.3px;top:225.3px;width:96.4px;height:44.3px;background:#1677ff;border-radius:9px;"></div>
<div class="a" style="left:869.7px;top:225.3px;width:96.4px;height:44.3px;background:#ff4d4f;border-radius:9px;"></div>
<svg class="i" style="left:0px;top:0px;" width="2363" height="300" viewBox="0 0 2363 300"><path d="M772.8 247.8 H788.8 M780.8 239.8 V255.8" stroke="#fff" stroke-width="2" /><g fill="none" stroke="#fff" stroke-width="1.8" stroke-linejoin="round">
<path d="M885.7 242.89999999999998 H902.7"/><path d="M891.2 242.89999999999998 V239.7 H897.2 V242.89999999999998"/>
<path d="M888.0 242.89999999999998 V255.89999999999998 H900.4000000000001 V242.89999999999998"/><path d="M892.3000000000001 246.2 V252.2 M896.1 246.2 V252.2"/></g></svg>
<div class="t" style="left:796.5px;top:238.88px;font-size:19.4px;color:#fff;font-weight:normal;"><span style="font-size:20px;letter-spacing:-0.5px;position:relative;top:-0.7px">新建</span></div>
<div class="t" style="left:909.5px;top:238.88px;font-size:19.4px;color:#fff;font-weight:normal;"><span style="font-size:20px;letter-spacing:-0.5px;position:relative;top:-0.7px">删除</span></div>
<svg class="i" style="left:0px;top:0px;" width="2363" height="300" viewBox="0 0 2363 300">
<g fill="none" stroke="#262626" stroke-width="2" stroke-linecap="round" stroke-linejoin="round"><path d="M2093 251 A8.6 8.6 0 1 1 2092.2 241.6"/></g>
<path d="M2094.2 237.8 L2094.2 245 L2087.2 243.6 Z" fill="#262626"/>
<g fill="none" stroke="#262626" stroke-width="2" stroke-linecap="round" stroke-linejoin="round"><path d="M2129.2 237 V250.5 M2123.5 245 L2129.2 250.7 L2134.9 245"/><path d="M2120 247 V255.8 H2138.4 V247"/></g>
<g fill="none" stroke="#262626" stroke-width="2" stroke-linecap="round" stroke-linejoin="round"><path d="M2168 242.5 V237.8 H2179.5 V242.5"/><path d="M2168 252.5 H2164 V242.8 H2183.5 V252.5 H2179.5"/><rect x="2168" y="248" width="11.5" height="8.2" rx="0.5" fill="#fff"/></g>
<g fill="none" stroke="#262626" stroke-width="2" stroke-linecap="round" stroke-linejoin="round"><path d="M2209.5 237.8 H2227.5 M2209.5 256.2 H2227.5 M2218.5 241.5 V252.5"/></g>
<path d="M2218.5 240 L2215.2 244.3 H2221.8 Z M2218.5 254 L2215.2 249.7 H2221.8 Z" fill="#262626"/>
<path d="M2272.80 247.10 L2272.79 247.45 L2272.77 247.79 L2272.73 248.13 L2272.65 248.47 L2272.51 248.79 L2272.23 249.08 L2271.72 249.30 L2271.08 249.44 L2270.56 249.59 L2270.27 249.78 L2270.09 250.00 L2269.95 250.24 L2269.83 250.48 L2269.70 250.72 L2269.57 250.95 L2269.43 251.18 L2269.29 251.41 L2269.15 251.64 L2269.01 251.87 L2268.91 252.14 L2268.89 252.49 L2269.02 253.01 L2269.22 253.64 L2269.28 254.19 L2269.17 254.58 L2268.96 254.86 L2268.71 255.09 L2268.43 255.30 L2268.15 255.49 L2267.85 255.67 L2267.55 255.84 L2267.24 255.99 L2266.92 256.13 L2266.59 256.23 L2266.24 256.27 L2265.85 256.17 L2265.41 255.84 L2264.96 255.35 L2264.58 254.98 L2264.26 254.82 L2263.98 254.78 L2263.71 254.78 L2263.44 254.79 L2263.17 254.80 L2262.90 254.80 L2262.63 254.80 L2262.36 254.79 L2262.09 254.78 L2261.82 254.78 L2261.54 254.82 L2261.22 254.98 L2260.84 255.35 L2260.39 255.84 L2259.95 256.17 L2259.56 256.27 L2259.21 256.23 L2258.88 256.13 L2258.56 255.99 L2258.25 255.84 L2257.95 255.67 L2257.65 255.49 L2257.37 255.30 L2257.09 255.09 L2256.84 254.86 L2256.63 254.58 L2256.52 254.19 L2256.58 253.64 L2256.78 253.01 L2256.91 252.49 L2256.89 252.14 L2256.79 251.87 L2256.65 251.64 L2256.51 251.41 L2256.37 251.18 L2256.23 250.95 L2256.10 250.72 L2255.97 250.48 L2255.85 250.24 L2255.71 250.00 L2255.53 249.78 L2255.24 249.59 L2254.72 249.44 L2254.08 249.30 L2253.57 249.08 L2253.29 248.79 L2253.15 248.47 L2253.07 248.13 L2253.03 247.79 L2253.01 247.45 L2253.00 247.10 L2253.01 246.75 L2253.03 246.41 L2253.07 246.07 L2253.15 245.73 L2253.29 245.41 L2253.57 245.12 L2254.08 244.90 L2254.72 244.76 L2255.24 244.61 L2255.53 244.42 L2255.71 244.20 L2255.85 243.96 L2255.97 243.72 L2256.10 243.48 L2256.23 243.25 L2256.37 243.02 L2256.51 242.79 L2256.65 242.56 L2256.79 242.33 L2256.89 242.06 L2256.91 241.71 L2256.78 241.19 L2256.58 240.56 L2256.52 240.01 L2256.63 239.62 L2256.84 239.34 L2257.09 239.11 L2257.37 238.90 L2257.65 238.71 L2257.95 238.53 L2258.25 238.36 L2258.56 238.21 L2258.88 238.07 L2259.21 237.97 L2259.56 237.93 L2259.95 238.03 L2260.39 238.36 L2260.84 238.85 L2261.22 239.22 L2261.54 239.38 L2261.82 239.42 L2262.09 239.42 L2262.36 239.41 L2262.63 239.40 L2262.90 239.40 L2263.17 239.40 L2263.44 239.41 L2263.71 239.42 L2263.98 239.42 L2264.26 239.38 L2264.58 239.22 L2264.96 238.85 L2265.41 238.36 L2265.85 238.03 L2266.24 237.93 L2266.59 237.97 L2266.92 238.07 L2267.24 238.21 L2267.55 238.36 L2267.85 238.53 L2268.15 238.71 L2268.43 238.90 L2268.71 239.11 L2268.96 239.34 L2269.17 239.62 L2269.28 240.01 L2269.22 240.56 L2269.02 241.19 L2268.89 241.71 L2268.91 242.06 L2269.01 242.33 L2269.15 242.56 L2269.29 242.79 L2269.43 243.02 L2269.57 243.25 L2269.70 243.48 L2269.83 243.72 L2269.95 243.96 L2270.09 244.20 L2270.27 244.42 L2270.56 244.61 L2271.08 244.76 L2271.72 244.90 L2272.23 245.12 L2272.51 245.41 L2272.65 245.73 L2272.73 246.07 L2272.77 246.41 L2272.79 246.75 Z" fill="none" stroke="#262626" stroke-width="1.9" stroke-linejoin="round"/><circle cx="2262.9" cy="247.1" r="3.6" fill="none" stroke="#262626" stroke-width="1.9"/>
<g fill="none" stroke="#262626" stroke-width="2" stroke-linecap="round" stroke-linejoin="round"><path d="M2299.5 239.5 L2304.5 244.5 M2315.8 239.5 L2310.8 244.5 M2299.5 255 L2304.5 250 M2315.8 255 L2310.8 250"/></g>
<path d="M2298.5 238.5 H2303.8 L2298.5 243.8 Z M2316.8 238.5 H2311.5 L2316.8 243.8 Z M2298.5 256 H2303.8 L2298.5 250.7 Z M2316.8 256 H2311.5 L2316.8 250.7 Z" fill="#262626"/>
</svg>
<div class="a" style="left:756.9px;top:287px;width:1561.5px;height:55.4px;background:#f7f7f7;border-radius:7px 7px 0 0"></div>
<div class="a" style="left:756.9px;top:341.4px;width:1561.5px;height:1px;background:#ebebeb"></div>
<div class="a" style="left:756.9px;top:399.6px;width:1561.5px;height:1px;background:#ebebeb"></div>
<div class="a" style="left:756.9px;top:457.6px;width:1561.5px;height:1px;background:#ebebeb"></div>
<div class="a" style="left:756.9px;top:515.6px;width:1561.5px;height:1px;background:#ebebeb"></div>
<div class="a" style="left:756.9px;top:573.6px;width:1561.5px;height:1px;background:#ebebeb"></div>
<div class="a" style="left:894.5px;top:301px;width:1px;height:27px;background:#e6e6e6"></div>
<div class="a" style="left:1136.5px;top:301px;width:1px;height:27px;background:#e6e6e6"></div>
<div class="a" style="left:1377.8px;top:301px;width:1px;height:27px;background:#e6e6e6"></div>
<div class="a" style="left:1503.0px;top:301px;width:1px;height:27px;background:#e6e6e6"></div>
<div class="a" style="left:1763.8px;top:301px;width:1px;height:27px;background:#e6e6e6"></div>
<div class="a" style="left:2014.1px;top:301px;width:1px;height:27px;background:#e6e6e6"></div>
<div class="a" style="left:2139.5px;top:301px;width:1px;height:27px;background:#e6e6e6"></div>
<div class="a" style="left:780.7px;top:303.3px;width:22px;height:22px;border:1px solid #d9d9d9;border-radius:5px;background:#fff"></div>
<div class="t" style="left:913px;top:305.48px;font-size:19.4px;color:#1f1f1f;font-weight:bold;">用户账号</div>
<div class="t" style="left:1155.5px;top:305.48px;font-size:19.4px;color:#1f1f1f;font-weight:bold;">用户名</div>
<div class="t" style="left:1411.2px;top:305.48px;font-size:19.4px;color:#1f1f1f;font-weight:bold;">性别</div>
<div class="t" style="left:1334.4px;width:600px;text-align:center;top:305.48px;font-size:19.4px;color:#1f1f1f;font-weight:bold;">角色</div>
<div class="t" style="left:1579px;width:600px;text-align:center;top:305.48px;font-size:19.4px;color:#1f1f1f;font-weight:bold;">创建时间</div>
<div class="t" style="left:2048px;top:305.48px;font-size:19.4px;color:#1f1f1f;font-weight:bold;">状态</div>
<div class="t" style="left:1928.8000000000002px;width:600px;text-align:center;top:305.48px;font-size:19.4px;color:#1f1f1f;font-weight:bold;">操作</div>
<svg class="i" style="left:0px;top:0px;" width="2363" height="400" viewBox="0 0 2363 400"><path d="M1108.1 311.4 L1114.1 305 L1120.1 311.4 Z M1108.1 316.8 L1114.1 323.4 L1120.1 316.8 Z" fill="#bfbfbf"/><path d="M1349.4 311.4 L1355.4 305 L1361.4 311.4 Z M1349.4 316.8 L1355.4 323.4 L1361.4 316.8 Z" fill="#bfbfbf"/><path d="M1474.3 311.4 L1480.3 305 L1486.3 311.4 Z M1474.3 316.8 L1480.3 323.4 L1486.3 316.8 Z" fill="#bfbfbf"/><path d="M1986.6 311.4 L1992.6 305 L1998.6 311.4 Z M1986.6 316.8 L1992.6 323.4 L1998.6 316.8 Z" fill="#bfbfbf"/><path d="M2111.3 311.4 L2117.3 305 L2123.3 311.4 Z M2111.3 316.8 L2117.3 323.4 L2123.3 316.8 Z" fill="#bfbfbf"/></svg>
<div class="a" style="left:780.7px;top:360.6px;width:22px;height:22px;border:1px solid #d9d9d9;border-radius:5px;background:#fff"></div>
<div class="t" style="left:559px;width:600px;text-align:center;top:363.06px;font-size:19.4px;color:#333;font-weight:normal;">1</div>
<div class="t" style="left:912.5px;top:363.06px;font-size:19.4px;color:#333;font-weight:normal;">user03</div>
<div class="t" style="left:1154.5px;top:362.68px;font-size:19.4px;color:#333;font-weight:normal;"><span style="font-size:20px;letter-spacing:-0.5px;position:relative;top:-0.7px">用户三</span></div>
<div class="t" style="left:1138.5px;width:600px;text-align:center;top:362.68px;font-size:19.4px;color:#333;font-weight:normal;"><span style="font-size:20px;letter-spacing:-0.5px;position:relative;top:-0.7px">女</span></div>
<div class="a" style="left:1593px;top:359.1px;width:79px;height:26px;background:#e8f3ff;border:1px solid #bcd9ff;border-radius:5px"></div>
<div class="t" style="left:1332.5px;width:600px;text-align:center;top:364.12px;font-size:16.7px;color:#1677ff;font-weight:normal;">普通用户</div>
<div class="t" style="left:1588px;width:600px;text-align:center;top:363.06px;font-size:19.4px;color:#333;font-weight:normal;">2020-09-15 17:50:51</div>
<div class="a" style="left:2055px;top:360.8px;width:42px;height:22px;border-radius:11px;background:#1677ff"></div>
<div class="a" style="left:2076.5px;top:362.8px;width:18px;height:18px;border-radius:50%;background:#fff"></div>
<div class="t" style="left:2164px;top:362.68px;font-size:19.4px;color:#1677ff;font-weight:normal;"><span style="font-size:20px;letter-spacing:-0.5px;position:relative;top:-0.7px">修改</span></div>
<div class="a" style="left:2219.5px;top:362.6px;width:1px;height:18.5px;background:#e0e0e0"></div>
<div class="t" style="left:2232.8px;top:362.68px;font-size:19.4px;color:#1677ff;font-weight:normal;"><span style="font-size:20px;letter-spacing:-0.5px;position:relative;top:-0.7px">更多</span></div>
<svg class="i" style="left:0px;top:0px;" width="2363" height="800" viewBox="0 0 2363 800"><path d="M2277.3 369.0 L2282.5 374.0 L2287.7 369.0" fill="none" stroke="#1677ff" stroke-width="1.7" stroke-linecap="round" stroke-linejoin="round"/></svg>
<div class="a" style="left:780.7px;top:418.6px;width:22px;height:22px;border:1px solid #d9d9d9;border-radius:5px;background:#fff"></div>
<div class="t" style="left:559px;width:600px;text-align:center;top:421.06px;font-size:19.4px;color:#333;font-weight:normal;">2</div>
<div class="t" style="left:912.5px;top:421.06px;font-size:19.4px;color:#333;font-weight:normal;">user02</div>
<div class="t" style="left:1154.5px;top:420.68px;font-size:19.4px;color:#333;font-weight:normal;"><span style="font-size:20px;letter-spacing:-0.5px;position:relative;top:-0.7px">用户二</span></div>
<div class="t" style="left:1138.5px;width:600px;text-align:center;top:420.68px;font-size:19.4px;color:#333;font-weight:normal;"><span style="font-size:20px;letter-spacing:-0.5px;position:relative;top:-0.7px">男</span></div>
<div class="a" style="left:1593px;top:417.1px;width:79px;height:26px;background:#e8f3ff;border:1px solid #bcd9ff;border-radius:5px"></div>
<div class="t" style="left:1332.5px;width:600px;text-align:center;top:422.12px;font-size:16.7px;color:#1677ff;font-weight:normal;">普通用户</div>
<div class="t" style="left:1588px;width:600px;text-align:center;top:421.06px;font-size:19.4px;color:#333;font-weight:normal;">2020-09-15 17:50:20</div>
<div class="a" style="left:2055px;top:418.8px;width:42px;height:22px;border-radius:11px;background:#1677ff"></div>
<div class="a" style="left:2076.5px;top:420.8px;width:18px;height:18px;border-radius:50%;background:#fff"></div>
<div class="t" style="left:2164px;top:420.68px;font-size:19.4px;color:#1677ff;font-weight:normal;"><span style="font-size:20px;letter-spacing:-0.5px;position:relative;top:-0.7px">修改</span></div>
<div class="a" style="left:2219.5px;top:420.6px;width:1px;height:18.5px;background:#e0e0e0"></div>
<div class="t" style="left:2232.8px;top:420.68px;font-size:19.4px;color:#1677ff;font-weight:normal;"><span style="font-size:20px;letter-spacing:-0.5px;position:relative;top:-0.7px">更多</span></div>
<svg class="i" style="left:0px;top:0px;" width="2363" height="800" viewBox="0 0 2363 800"><path d="M2277.3 427.0 L2282.5 432.0 L2287.7 427.0" fill="none" stroke="#1677ff" stroke-width="1.7" stroke-linecap="round" stroke-linejoin="round"/></svg>
<div class="a" style="left:780.7px;top:476.6px;width:22px;height:22px;border:1px solid #d9d9d9;border-radius:5px;background:#fff"></div>
<div class="t" style="left:559px;width:600px;text-align:center;top:479.06px;font-size:19.4px;color:#333;font-weight:normal;">3</div>
<div class="t" style="left:912.5px;top:479.06px;font-size:19.4px;color:#333;font-weight:normal;">user01</div>
<div class="t" style="left:1154.5px;top:478.68px;font-size:19.4px;color:#333;font-weight:normal;"><span style="font-size:20px;letter-spacing:-0.5px;position:relative;top:-0.7px">用户一</span></div>
<div class="t" style="left:1138.5px;width:600px;text-align:center;top:478.68px;font-size:19.4px;color:#333;font-weight:normal;"><span style="font-size:20px;letter-spacing:-0.5px;position:relative;top:-0.7px">女</span></div>
<div class="a" style="left:1593px;top:475.1px;width:79px;height:26px;background:#e8f3ff;border:1px solid #bcd9ff;border-radius:5px"></div>
<div class="t" style="left:1332.5px;width:600px;text-align:center;top:480.12px;font-size:16.7px;color:#1677ff;font-weight:normal;">普通用户</div>
<div class="t" style="left:1588px;width:600px;text-align:center;top:479.06px;font-size:19.4px;color:#333;font-weight:normal;">2020-09-15 17:49:37</div>
<div class="a" style="left:2055px;top:476.8px;width:42px;height:22px;border-radius:11px;background:#1677ff"></div>
<div class="a" style="left:2076.5px;top:478.8px;width:18px;height:18px;border-radius:50%;background:#fff"></div>
<div class="t" style="left:2164px;top:478.68px;font-size:19.4px;color:#1677ff;font-weight:normal;"><span style="font-size:20px;letter-spacing:-0.5px;position:relative;top:-0.7px">修改</span></div>
<div class="a" style="left:2219.5px;top:478.6px;width:1px;height:18.5px;background:#e0e0e0"></div>
<div class="t" style="left:2232.8px;top:478.68px;font-size:19.4px;color:#1677ff;font-weight:normal;"><span style="font-size:20px;letter-spacing:-0.5px;position:relative;top:-0.7px">更多</span></div>
<svg class="i" style="left:0px;top:0px;" width="2363" height="800" viewBox="0 0 2363 800"><path d="M2277.3 485.0 L2282.5 490.0 L2287.7 485.0" fill="none" stroke="#1677ff" stroke-width="1.7" stroke-linecap="round" stroke-linejoin="round"/></svg>
<div class="a" style="left:780.7px;top:534.6px;width:22px;height:22px;border:1px solid #d9d9d9;border-radius:5px;background:#fff"></div>
<div class="t" style="left:559px;width:600px;text-align:center;top:537.06px;font-size:19.4px;color:#333;font-weight:normal;">4</div>
<div class="t" style="left:912.5px;top:537.06px;font-size:19.4px;color:#333;font-weight:normal;">admin</div>
<div class="t" style="left:1154.5px;top:536.68px;font-size:19.4px;color:#333;font-weight:normal;"><span style="font-size:20px;letter-spacing:-0.5px;position:relative;top:-0.7px">管理员</span></div>
<div class="t" style="left:1138.5px;width:600px;text-align:center;top:536.68px;font-size:19.4px;color:#333;font-weight:normal;"><span style="font-size:20px;letter-spacing:-0.5px;position:relative;top:-0.7px">女</span></div>
<div class="a" style="left:1601.5px;top:533.1px;width:62px;height:26px;background:#e8f3ff;border:1px solid #bcd9ff;border-radius:5px"></div>
<div class="t" style="left:1332.5px;width:600px;text-align:center;top:538.12px;font-size:16.7px;color:#1677ff;font-weight:normal;">管理员</div>
<div class="t" style="left:1588px;width:600px;text-align:center;top:537.06px;font-size:19.4px;color:#333;font-weight:normal;">2020-01-13 14:43:52</div>
<div class="a" style="left:2055px;top:534.8000000000001px;width:42px;height:22px;border-radius:11px;background:#1677ff"></div>
<div class="a" style="left:2076.5px;top:536.8000000000001px;width:18px;height:18px;border-radius:50%;background:#fff"></div>
<div class="t" style="left:2164px;top:536.68px;font-size:19.4px;color:#1677ff;font-weight:normal;"><span style="font-size:20px;letter-spacing:-0.5px;position:relative;top:-0.7px">修改</span></div>
<div class="a" style="left:2219.5px;top:536.6px;width:1px;height:18.5px;background:#e0e0e0"></div>
<div class="t" style="left:2232.8px;top:536.68px;font-size:19.4px;color:#1677ff;font-weight:normal;"><span style="font-size:20px;letter-spacing:-0.5px;position:relative;top:-0.7px">更多</span></div>
<svg class="i" style="left:0px;top:0px;" width="2363" height="800" viewBox="0 0 2363 800"><path d="M2277.3 543.0 L2282.5 548.0 L2287.7 543.0" fill="none" stroke="#1677ff" stroke-width="1.7" stroke-linecap="round" stroke-linejoin="round"/></svg>
<div class="a" style="left:756.9px;top:1165.7px;width:1561.5px;height:1px;background:#ebebeb"></div>
<div class="t" style="left:1302.5px;top:1191.58px;font-size:19.4px;color:#333;font-weight:normal;"><span style="font-size:20px;letter-spacing:-0.5px;position:relative;top:-0.7px">共</span> 4 <span style="font-size:20px;letter-spacing:-0.5px;position:relative;top:-0.7px">条</span></div>
<svg class="i" style="left:0px;top:0px;" width="2363" height="1261" viewBox="0 0 2363 1261"><path d="M1394.5 1194.5 L1387.5 1201.3 L1394.5 1208" fill="none" stroke="#bfbfbf" stroke-width="1.7" stroke-linecap="round" stroke-linejoin="round"/><path d="M1465 1194.5 L1472 1201.3 L1465 1208" fill="none" stroke="#8c8c8c" stroke-width="1.7" stroke-linecap="round" stroke-linejoin="round"/></svg>
<div class="a" style="left:1413.8px;top:1184.4px;width:33px;height:33px;border:1px solid #1677ff;border-radius:6px"></div>
<div class="t" style="left:1130.3px;width:600px;text-align:center;top:1192.46px;font-size:19.4px;color:#1677ff;font-weight:bold;">1</div>
<div class="a" style="left:1497.6px;top:1185.2px;width:121px;height:32.3px;border:1px solid #dcdcdc;border-radius:7px"></div>
<div class="t" style="left:1514.5px;top:1192.46px;font-size:19.4px;color:#333;font-weight:normal;">10<span style="font-size:20px;letter-spacing:-0.5px;position:relative;top:-0.7px">条</span>/<span style="font-size:20px;letter-spacing:-0.5px;position:relative;top:-0.7px">页</span></div>
<svg class="i" style="left:0px;top:0px;" width="2363" height="1261" viewBox="0 0 2363 1261"><path d="M1599.5 1198 L1604.8 1203.2 L1610 1198" fill="none" stroke="#a8a8a8" stroke-width="1.5" stroke-linecap="round" stroke-linejoin="round"/></svg>
<div class="t" style="left:1631px;top:1192.08px;font-size:19.4px;color:#333;font-weight:normal;"><span style="font-size:20px;letter-spacing:-0.5px;position:relative;top:-0.7px">前往</span></div>
<div class="a" style="left:1681.2px;top:1185.2px;width:60.2px;height:32.3px;border:1px solid #dcdcdc;border-radius:7px"></div>
<div class="t" style="left:1411.3px;width:600px;text-align:center;top:1192.46px;font-size:19.4px;color:#333;font-weight:normal;">1</div>
<div class="t" style="left:1752.8px;top:1192.08px;font-size:19.4px;color:#333;font-weight:normal;"><span style="font-size:20px;letter-spacing:-0.5px;position:relative;top:-0.7px">页</span></div>
</body></html>
